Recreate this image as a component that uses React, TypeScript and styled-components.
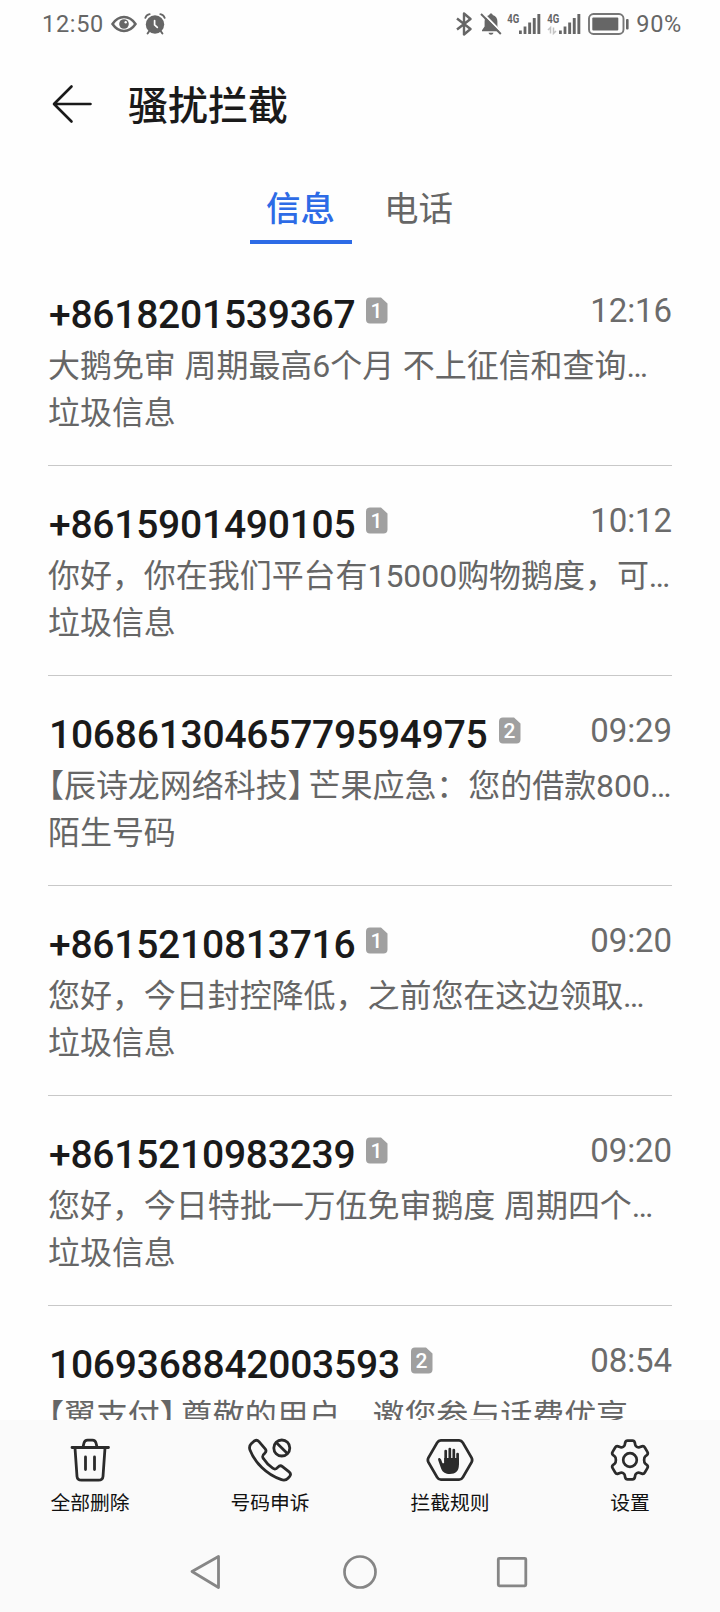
import React from "react";
import styled, { createGlobalStyle } from "styled-components";

const GlobalStyle = createGlobalStyle`
  * { box-sizing: border-box; }
  body {
    margin: 0;
    background: #fefefe;
    font-family: Roboto, "Noto Sans CJK SC", sans-serif;
  }
  svg { display: block; flex: none; }
`;

const Screen = styled.div`
  display: flex;
  flex-direction: column;
  width: 720px;
  height: 1612px;
  overflow: hidden;
  background: #fefefe;
`;

const StatusBar = styled.div`
  display: flex;
  justify-content: space-between;
  height: 48px;
  padding: 0 38px 0 42px;
  color: #666;
`;

const StatusGroup = styled.div`
  display: flex;
  align-items: center;
  height: 48px;
`;

const StatusText = styled.span`
  font-size: 23.5px;
  line-height: 50px;
  letter-spacing: 0.7px;
`;

const Header = styled.header`
  display: flex;
  align-items: center;
  height: 112px;
  padding: 0 0 0 52px;
`;

const Title = styled.h1`
  margin: 0 0 0 36px;
  padding-top: 5px;
  font-size: 40px;
  font-weight: 500;
  line-height: 60px;
  color: #1a1a1a;
`;

const Tabs = styled.nav`
  display: flex;
  justify-content: center;
  height: 96px;
  padding-top: 20px;
`;

const Tab = styled.div<{ $active?: boolean }>`
  width: 102px;
  height: 64px;
  margin: 0 8px;
  padding-right: 1px;
  border-bottom: 4px solid ${(p) => (p.$active ? "#2d6be6" : "transparent")};
  color: ${(p) => (p.$active ? "#2d6be6" : "#666")};
  font-size: 34.5px;
  font-weight: ${(p) => (p.$active ? 500 : 400)};
  line-height: 58px;
  text-align: center;
`;

const List = styled.main`
  flex: 1;
  min-height: 0;
  overflow: hidden;
  padding: 0 48px;
`;

const Item = styled.article`
  height: 210px;
  padding-top: 32px;
  border-bottom: 1px solid #c8c8c8;
`;

const ItemHead = styled.div`
  display: flex;
  height: 55px;
`;

const Sender = styled.div`
  padding-left: 1px;
  font-size: 39px;
  font-weight: 500;
  line-height: 54px;
  letter-spacing: -0.24px;
  color: #1a1a1a;
`;

const BadgeBox = styled.div`
  padding: 9px 0 0 11px;
`;

const Time = styled.div`
  margin-left: auto;
  font-size: 33px;
  font-weight: 400;
  line-height: 46px;
  letter-spacing: -0.1px;
  color: #6b6b6b;
`;

const Line = styled.div`
  height: 47px;
  font-size: 32px;
  line-height: 47px;
  letter-spacing: -0.05px;
  word-spacing: 0.8px;
  white-space: nowrap;
  color: #666;
`;

const Bracket = styled.span<{ $close?: boolean }>`
  font-feature-settings: "halt";
  margin-right: ${(p) => (p.$close ? 5 : 0)}px;
`;

const Toolbar = styled.footer`
  display: flex;
  height: 112px;
  padding-top: 16px;
  background: #fafafa;
`;

const Tool = styled.div`
  display: flex;
  flex-direction: column;
  align-items: center;
  width: 180px;
`;

const ToolLabel = styled.span`
  margin-top: 4px;
  font-size: 19.8px;
  line-height: 31px;
  color: #111;
`;

const NavBar = styled.div`
  display: flex;
  align-items: center;
  justify-content: center;
  gap: 112px;
  height: 80px;
  background: #fafafa;
`;

const EyeIcon = () => (
  <svg width="26" height="20" viewBox="0 0 26 20" fill="none" stroke="#666">
    <path d="M1.500 10C5 4.800 9 3 13 3s8 1.800 11.500 7C21 15.200 17 17 13 17S5 15.200 1.500 10Z" strokeWidth="2.500" />
    <circle cx="13" cy="10" r="4.800" fill="#666" stroke="none" />
    <circle cx="14.700" cy="8.200" r="1.200" fill="#fefefe" stroke="none" />
  </svg>
);

const AlarmIcon = () => (
  <svg width="22" height="22" viewBox="0 0 22 22" fill="none" stroke="#666" strokeLinecap="round">
    <circle cx="11" cy="11.500" r="9.200" fill="#666" stroke="none" />
    <path d="M1.300 4.800C2.100 2.800 3.700 1.500 5.700 1.200M20.700 4.800C19.900 2.800 18.300 1.500 16.300 1.200" strokeWidth="1.800" />
    <path d="M5 18.500 3.600 20.500M17 18.500l1.400 2" strokeWidth="2" />
    <path d="M10.600 7.500v4.300l2.700 2.500" stroke="#fefefe" strokeWidth="1.700" />
  </svg>
);

const BluetoothIcon = () => (
  <svg width="16" height="24" viewBox="0 0 16 24" fill="none" stroke="#666" strokeWidth="2.400" strokeLinejoin="round">
    <path d="M1 6.500 14.500 17 8 22.500v-21L14.500 7 1 17.500" />
  </svg>
);

const MutedBellIcon = () => (
  <svg width="22" height="24" viewBox="0 0 22 24">
    <path d="M11 1.500c-1 0-1.700.7-1.700 1.600C6 4 4.600 6.600 4.600 9.500v5L2 18.200v1h18v-1l-2.600-3.700v-5c0-2.900-1.400-5.500-4.700-6.400 0-.9-.7-1.600-1.700-1.600ZM8.500 20.700h5c-.3 1.300-1.200 2-2.500 2s-2.200-.7-2.500-2Z" fill="#666" />
    <path d="M2.500.8 22 20.600" stroke="#fefefe" strokeWidth="2" />
    <path d="M1 2 20.800 22" stroke="#666" strokeWidth="1.900" />
  </svg>
);

const SignalIcon = ({ data }: { data?: boolean }) => (
  <svg width="34" height="24" viewBox="0 0 34 24" fill="#666">
    <text x="0.300" y="11" fontSize="12.500" fontWeight="700" textLength="12" lengthAdjust="spacingAndGlyphs">4G</text>
    <rect x="12" y="18.500" width="2.800" height="3.500" />
    <rect x="16.600" y="14.500" width="2.800" height="7.500" />
    <rect x="21.200" y="10.500" width="2.900" height="11.500" />
    <rect x="25.800" y="6" width="2.900" height="16" />
    <rect x="30.400" y="2" width="2.900" height="20" />
    {data && <path d="M3.500 21.500v-6L1 18M6.500 15.500v6L9 19" fill="none" stroke="#c4c4c4" strokeWidth="1.500" />}
  </svg>
);

const BatteryIcon = () => (
  <svg width="42" height="24" viewBox="0 0 42 24" fill="none">
    <rect x="1" y="2" width="34.500" height="20" rx="4.500" stroke="#777" strokeWidth="1.900" />
    <rect x="4.300" y="5.500" width="26" height="13" rx="1" fill="#666" />
    <rect x="38" y="7" width="2.600" height="10.500" rx="1" fill="#666" />
  </svg>
);

const BackIcon = () => (
  <svg width="40" height="40" viewBox="0 0 40 40" fill="none" stroke="#1a1a1a" strokeWidth="2.600" strokeLinecap="round" strokeLinejoin="round">
    <path d="M38.500 20H2.500M19.500 2.500 2 20l17.500 17.500" />
  </svg>
);

const SimBadge = ({ slot }: { slot: number }) => (
  <svg width="22" height="27" viewBox="0 0 22 27">
    <path d="M4 .5h11L21.500 6.500V22.500a4 4 0 0 1-4 4H4a4 4 0 0 1-4-4V4.500a4 4 0 0 1 4-4Z" fill="#a0a0a0" />
    <text x="10.500" y="21" fontSize="21" fontWeight="500" fill="#fff" textAnchor="middle">{slot}</text>
  </svg>
);

const TrashIcon = () => (
  <svg width="48" height="48" viewBox="0 0 48 48" fill="none" stroke="#2b2b2b" strokeWidth="2.800" strokeLinecap="round" strokeLinejoin="round">
    <path d="M6 11.500h36.500M17 11l1-4c.5-2 1.600-2.800 3.500-2.800h5c1.900 0 3 .8 3.500 2.800l1 4M9 12l2 28.500c.2 2.300 1.800 3.700 4.500 3.700h17c2.700 0 4.300-1.400 4.500-3.700l2-28.500M19.500 21v12.500M28.500 21v12.500" />
  </svg>
);

const PhoneBlockIcon = () => (
  <svg width="48" height="48" viewBox="0 0 48 48" fill="none" stroke="#2b2b2b" strokeWidth="2.800" strokeLinejoin="round">
    <path d="M5.200 7.800 8 5.200c1.800-1.400 3.500-1.200 5 .4l6.200 7.200c1.200 1.600 1 3-.3 4.300-2.700 2.200-3 3.300-1.500 5.500 2.500 4 5.300 6.900 9.300 9.600 2.200 1.500 3.400 1.200 5.300-1.100 1.400-1.500 2.900-1.700 4.500-.5l6.600 5.200c1.700 1.400 1.800 3.100.4 4.800l-1.500 1.700c-1.800 1.900-4.200 2.300-7.200 1.100C20.500 38.500 8.800 26.500 4 14c-.9-2.500-.5-4.500 1.200-6.200Z" />
    <circle cx="35.800" cy="12" r="8" />
    <path d="m30.200 6.400 11.200 11.200" />
  </svg>
);

const HandIcon = () => (
  <svg width="48" height="48" viewBox="0 0 48 48" fill="none" strokeLinecap="round" strokeLinejoin="round">
    <path d="M14.900 4.400h18.200c1.700 0 2.800.7 3.700 2.200l8.700 15c.9 1.700.9 3.100 0 4.800l-8.700 15c-.9 1.500-2 2.200-3.700 2.200H14.900c-1.700 0-2.800-.7-3.700-2.200l-8.700-15c-.9-1.700-.9-3.100 0-4.800l8.700-15c.9-1.500 2-2.200 3.700-2.200Z" stroke="#2b2b2b" strokeWidth="2.800" />
    <path d="M15.200 23.700c-1.300-2.500-3.800-2-2.900.7l2.900 8.400c1.500 3.700 4.500 5.200 8.600 5.200 5.800 0 9.100-3 9.100-9v-7H18.200v4.500c0 1-1.400 1.300-1.900.2Z" fill="#2b2b2b" />
    <path d="M19.700 15v11M23.800 13v13M27.800 14v12M31.600 18v10" stroke="#2b2b2b" strokeWidth="2.700" />
  </svg>
);

const GearIcon = () => (
  <svg width="48" height="48" viewBox="0 0 48 48" fill="none" stroke="#2b2b2b" strokeWidth="2.700" strokeLinejoin="round">
    <path d="M21.500 4.700h5c1.300 0 2 .6 2.300 1.900l.5 2.400c.3 1.500 2.600 2.800 4 2.300l2.600-.9c1.200-.4 2.200-.1 2.900 1.100l2.600 4.400c.7 1.200.5 2.200-.4 3l-1.900 1.700c-1.300 1.100-1.300 5.700 0 6.800l1.900 1.700c.9.8 1.100 1.800.4 3l-2.600 4.400c-.7 1.200-1.700 1.500-2.900 1.100l-2.600-.9c-1.400-.5-3.700.8-4 2.300l-.5 2.400c-.3 1.300-1 1.900-2.300 1.900h-5c-1.300 0-2-.6-2.300-1.900l-.5-2.400c-.3-1.500-2.600-2.800-4-2.300l-2.600.9c-1.200.4-2.200.1-2.900-1.100l-2.600-4.400c-.7-1.200-.5-2.200.4-3l1.900-1.700c1.300-1.100 1.300-5.700 0-6.800L7 18.900c-.9-.8-1.100-1.800-.4-3l2.600-4.400c.7-1.200 1.700-1.500 2.900-1.100l2.600.9c1.400.5 3.700-.8 4-2.300l.5-2.400c.3-1.300 1-1.900 2.300-1.900Z" />
    <circle cx="24" cy="24" r="6.800" />
  </svg>
);

type Message = {
  sender: string;
  slot: number;
  time: string;
  org?: string;
  text: string;
  kind: string;
};

const messages: Message[] = [
  { sender: "+8618201539367", slot: 1, time: "12:16", text: "大鹅免审 周期最高6个月 不上征信和查询…", kind: "垃圾信息" },
  { sender: "+8615901490105", slot: 1, time: "10:12", text: "你好，你在我们平台有15000购物鹅度，可…", kind: "垃圾信息" },
  { sender: "10686130465779594975", slot: 2, time: "09:29", org: "辰诗龙网络科技", text: "芒果应急：您的借款800…", kind: "陌生号码" },
  { sender: "+8615210813716", slot: 1, time: "09:20", text: "您好，今日封控降低，之前您在这边领取…", kind: "垃圾信息" },
  { sender: "+8615210983239", slot: 1, time: "09:20", text: "您好，今日特批一万伍免审鹅度 周期四个…", kind: "垃圾信息" },
  { sender: "1069368842003593", slot: 2, time: "08:54", org: "翼支付", text: "尊敬的用户，邀您参与话费优享", kind: "垃圾信息" },
];

const tools = [
  { label: "全部删除", icon: <TrashIcon /> },
  { label: "号码申诉", icon: <PhoneBlockIcon /> },
  { label: "拦截规则", icon: <HandIcon /> },
  { label: "设置", icon: <GearIcon /> },
];

const StatusIcons = styled(StatusGroup)`
  & > svg:nth-of-type(1) { margin-right: 8px; }
  & > svg:nth-of-type(2) { margin-right: 5px; }
  & > svg:nth-of-type(3) { margin-right: 6px; }
  & > svg:nth-of-type(4) { margin-right: 7px; }
  & > svg:nth-of-type(5) { margin-right: 6px; }
`;

const LeftStatus = styled(StatusGroup)`
  gap: 7px;
`;

export default function App() {
  return (
    <Screen>
      <GlobalStyle />
      <StatusBar>
        <LeftStatus>
          <StatusText>12:50</StatusText>
          <EyeIcon />
          <AlarmIcon />
        </LeftStatus>
        <StatusIcons>
          <BluetoothIcon />
          <MutedBellIcon />
          <SignalIcon />
          <SignalIcon data />
          <BatteryIcon />
          <StatusText>90%</StatusText>
        </StatusIcons>
      </StatusBar>
      <Header>
        <BackIcon />
        <Title>骚扰拦截</Title>
      </Header>
      <Tabs>
        <Tab $active>信息</Tab>
        <Tab>电话</Tab>
      </Tabs>
      <List>
        {messages.map((m) => (
          <Item key={m.sender}>
            <ItemHead>
              <Sender>{m.sender}</Sender>
              <BadgeBox>
                <SimBadge slot={m.slot} />
              </BadgeBox>
              <Time>{m.time}</Time>
            </ItemHead>
            <Line>
              {m.org && (
                <>
                  <Bracket>【</Bracket>
                  {m.org}
                  <Bracket $close>】</Bracket>
                </>
              )}
              {m.text}
            </Line>
            <Line>{m.kind}</Line>
          </Item>
        ))}
      </List>
      <Toolbar>
        {tools.map((t) => (
          <Tool key={t.label}>
            {t.icon}
            <ToolLabel>{t.label}</ToolLabel>
          </Tool>
        ))}
      </Toolbar>
      <NavBar>
        <svg width="40" height="40" viewBox="0 0 40 40" fill="none" stroke="#868686" strokeWidth="2.800" strokeLinejoin="round">
          <path d="M30.500 4.500v31L4 19.500Z" />
        </svg>
        <svg width="40" height="40" viewBox="0 0 40 40" fill="none" stroke="#868686" strokeWidth="2.700">
          <circle cx="20" cy="20" r="15.500" />
        </svg>
        <svg width="40" height="40" viewBox="0 0 40 40" fill="none" stroke="#868686" strokeWidth="2.800">
          <rect x="6.300" y="6.300" width="27.500" height="27.500" rx="1" />
        </svg>
      </NavBar>
    </Screen>
  );
}
